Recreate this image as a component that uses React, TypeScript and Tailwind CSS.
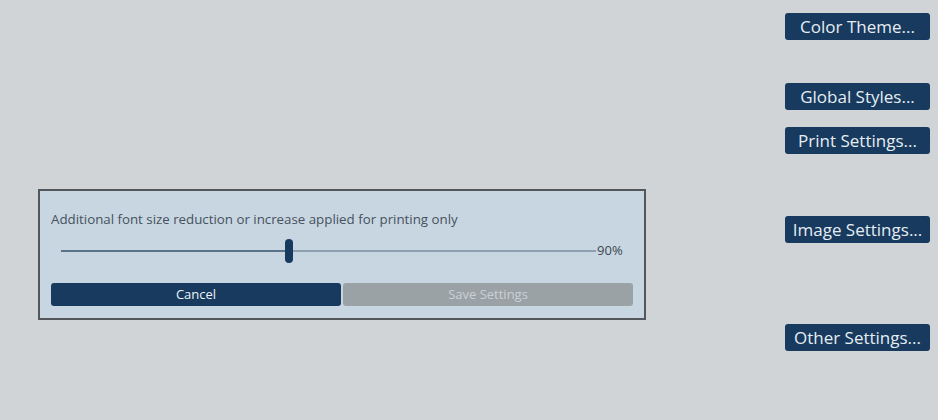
import * as React from "react"

const font = { fontFamily: '"Open Sans", "Noto Sans", sans-serif' }

function SideButton({ label, className = "" }: { label: string; className?: string }) {
  return (
    <button
      className={`flex h-[27px] w-[145px] items-center justify-center rounded-[3px] bg-[#173a5e] text-[17px] leading-none text-[#e6edf3] ${className}`}
    >
      {label}
    </button>
  )
}

function PrintSlider({ value }: { value: number }) {
  // position du pouce sur la piste, en pourcentage
  const pct = 42.6
  return (
    <div className="mt-[11px] flex h-6 items-center pl-[10px]">
      <div className="relative h-6 flex-1">
        <div className="absolute top-[11px] left-0 h-[2px] bg-[#5b7389]" style={{ width: `${pct}%` }} />
        <div className="absolute top-[11px] right-0 h-[2px] bg-[#8ea0b1]" style={{ width: `${100 - pct}%` }} />
        <div
          className="absolute top-0 h-6 w-2 -translate-x-1/2 rounded-full bg-[#173a5e]"
          style={{ left: `${pct}%` }}
        />
      </div>
      <span className="w-[37px] pl-[1px] text-[13px] text-[#3c4650]">{value}%</span>
    </div>
  )
}

export default function App() {
  return (
    <div className="flex min-h-[420px] justify-between bg-[#d0d4d7]" style={font}>
      <div className="pt-[189px] pl-[38px]">
        <div className="h-[131px] w-[608px] border-2 border-[#53575b] bg-[#c8d6e1] px-[11px] pt-[19px]">
          <p className="text-[13.3px] leading-[18px] text-[#46525e]">
            Additional font size reduction or increase applied for printing only
          </p>
          <PrintSlider value={90} />
          <div className="mt-[20px] flex gap-[2px]">
            <button className="h-[23px] flex-1 rounded-[3px] bg-[#173a5e] text-[13px] text-[#eef3f7]">
              Cancel
            </button>
            <button className="h-[23px] flex-1 rounded-[3px] bg-[#9ba2a5] text-[13px] text-[#c9d1d7]">
              Save Settings
            </button>
          </div>
        </div>
      </div>

      <div className="flex flex-col pt-[13px] pr-[8px]">
        <SideButton label="Color Theme..." />
        <SideButton label="Global Styles..." className="mt-[43px]" />
        <SideButton label="Print Settings..." className="mt-[17px]" />
        <SideButton label="Image Settings..." className="mt-[62px]" />
        <SideButton label="Other Settings..." className="mt-[81px]" />
      </div>
    </div>
  )
}
